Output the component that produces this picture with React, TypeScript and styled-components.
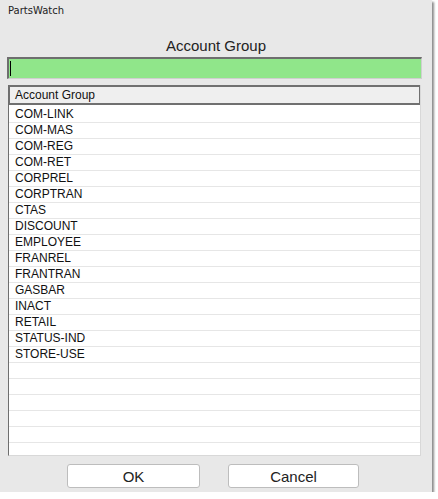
import React from "react";
import styled, { createGlobalStyle } from "styled-components";

const Global = createGlobalStyle`
  html, body { margin: 0; padding: 0; background: #ffffff; }
  body { font-family: "Liberation Sans", Arial, sans-serif; }
`;

const Window = styled.div`
  width: 432px;
  height: 492px;
  background: #e8e8e8;
  box-shadow: 2px 2px 2px rgba(0, 0, 0, 0.45);
  display: flex;
  flex-direction: column;
  box-sizing: border-box;
`;

const TitleBar = styled.div`
  height: 30px;
  padding: 5px 0 0 8px;
  box-sizing: border-box;
  font-family: "DejaVu Sans", sans-serif;
  font-size: 10px;
  color: #222;
`;

const Heading = styled.div`
  text-align: center;
  font-size: 15px;
  color: #222;
  height: 27px;
  line-height: 32px;
`;

const SearchInput = styled.div`
  margin: 0 10px 0 7px;
  height: 22px;
  background: #90e68a;
  border-top: 2px solid #6e6e6e;
  border-left: 2px solid #6e6e6e;
  border-right: 1px solid #cfcfcf;
  border-bottom: 1px solid #cfcfcf;
  box-sizing: border-box;
  display: flex;
  align-items: center;
  padding-left: 1px;
`;

const Caret = styled.div`
  width: 1px;
  height: 15px;
  background: #000;
`;

const Grid = styled.div`
  margin: 6px 11px 0 8px;
  height: 371px;
  background: #fff;
  border-left: 1px solid #6e6e6e;
  border-right: 1px solid #d8d8d8;
  border-bottom: 1px solid #d8d8d8;
  box-sizing: border-box;
  display: flex;
  flex-direction: column;
  overflow: hidden;
`;

const Header = styled.div`
  height: 20px;
  flex: none;
  background: #efefef;
  border: 2px solid #707070;
  margin: 0 -1px 2px -1px;
  box-sizing: border-box;
  font-size: 12px;
  line-height: 16px;
  padding-left: 5px;
  color: #111;
`;

const Row = styled.div`
  height: 16px;
  flex: none;
  border-bottom: 1px solid #e6e6e6;
  box-sizing: border-box;
  font-size: 12px;
  line-height: 15px;
  padding-left: 6px;
  color: #111;
`;

const Footer = styled.div`
  display: flex;
  gap: 28px;
  padding: 8px 0 0 67px;
`;

const Button = styled.button<{ $w: number }>`
  width: ${(p) => p.$w}px;
  height: 24px;
  background: #fff;
  border: 1px solid #bdbdbd;
  border-radius: 3px;
  font-family: "Liberation Sans", Arial, sans-serif;
  font-size: 15px;
  color: #222;
  padding: 0;
`;

const items = [
  "COM-LINK",
  "COM-MAS",
  "COM-REG",
  "COM-RET",
  "CORPREL",
  "CORPTRAN",
  "CTAS",
  "DISCOUNT",
  "EMPLOYEE",
  "FRANREL",
  "FRANTRAN",
  "GASBAR",
  "INACT",
  "RETAIL",
  "STATUS-IND",
  "STORE-USE",
];

export default function App() {
  const rows = [...items];
  while (rows.length < 23) rows.push("");
  return (
    <>
      <Global />
      <Window>
        <TitleBar>PartsWatch</TitleBar>
        <Heading>Account Group</Heading>
        <SearchInput>
          <Caret />
        </SearchInput>
        <Grid>
          <Header>Account Group</Header>
          {rows.map((r, i) => (
            <Row key={i}>{r}</Row>
          ))}
        </Grid>
        <Footer>
          <Button $w={133}>OK</Button>
          <Button $w={131}>Cancel</Button>
        </Footer>
      </Window>
    </>
  );
}
